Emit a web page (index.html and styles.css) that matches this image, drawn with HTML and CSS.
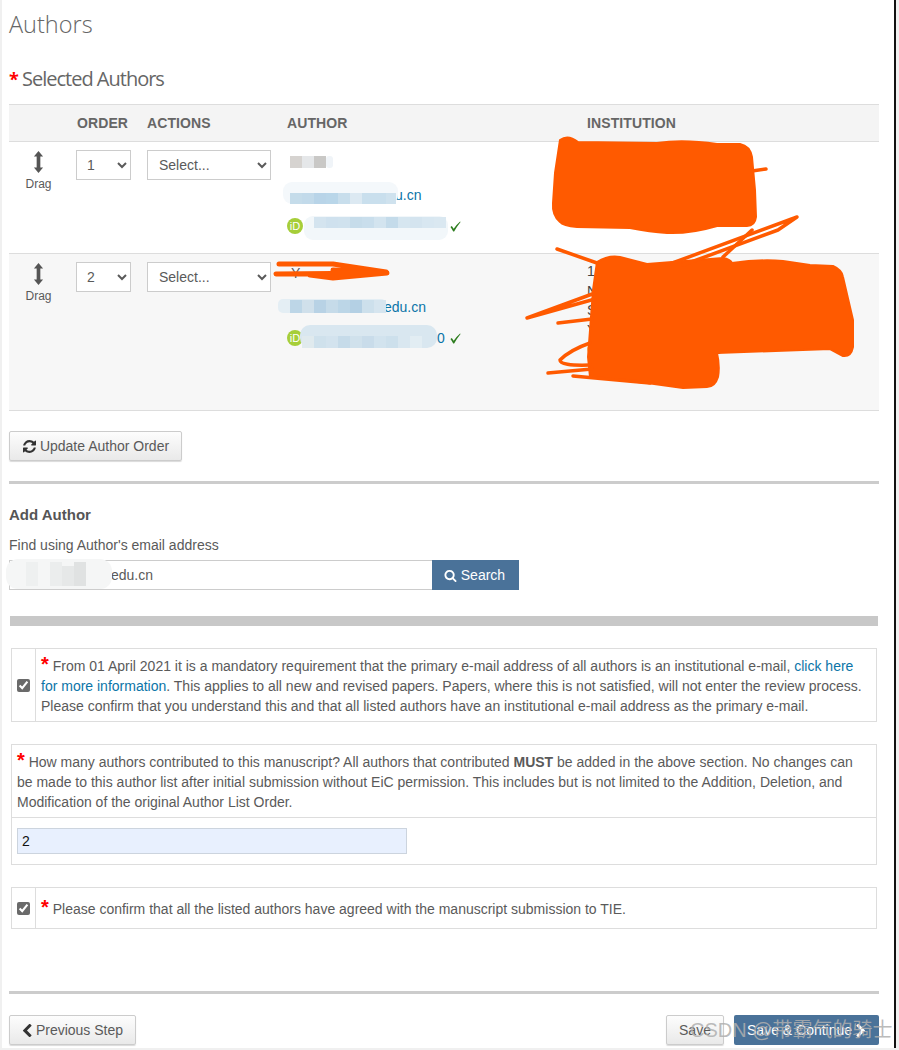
FILE: index.html
```html
<!DOCTYPE html>
<html lang="en">
<head>
    <meta charset="UTF-8">
    <meta name="viewport" content="width=device-width, initial-scale=1.0">
    <title>Authors</title>
    <link rel="stylesheet" href="styles.css">
</head>
<body>

<div class="page">
    <h1>Authors</h1>
    <h2><span class="req-big">*</span> Selected Authors</h2>

    <table class="authors">
        <thead>
            <tr>
                <th class="col-drag"></th>
                <th class="col-order">Order</th>
                <th class="col-actions">Actions</th>
                <th class="col-author">Author</th>
                <th>Institution</th>
            </tr>
        </thead>
        <tbody>
            <tr class="row-one">
                <td class="drag">
                    <svg class="drag-icon" viewBox="0 0 12 24"><path d="M6 0l5 6H8v12h3l-5 6-5-6h3V6H1z"/></svg>
                    <div>Drag</div>
                </td>
                <td><select class="order-select"><option>1</option><option>2</option></select></td>
                <td><select class="action-select"><option>Select...</option></select></td>
                <td>
                    <div class="name">&nbsp;</div>
                    <div class="email"><a class="mail-one" href="#">u.cn</a></div>
                    <div class="orcid">
                        <span class="orcid-badge">iD</span>
                        <a class="orcid-num-one" href="#">&nbsp;</a>
                        <svg class="tick" viewBox="0 0 12 12"><path d="M0.5 6.5L2 5.5L4 8.5Q7 4 11 0.5L11.5 1Q7.5 6 4.5 11.5H3.5Q2 8.5 0.5 6.5z"/></svg>
                    </div>
                </td>
                <td class="inst">&nbsp;</td>
            </tr>
            <tr class="row-two">
                <td class="drag">
                    <svg class="drag-icon" viewBox="0 0 12 24"><path d="M6 0l5 6H8v12h3l-5 6-5-6h3V6H1z"/></svg>
                    <div>Drag</div>
                </td>
                <td><select class="order-select"><option>2</option><option>1</option></select></td>
                <td><select class="action-select"><option>Select...</option></select></td>
                <td>
                    <div class="name">Y</div>
                    <div class="email"><a class="mail-two" href="#">edu.cn</a></div>
                    <div class="orcid">
                        <span class="orcid-badge">iD</span>
                        <a class="orcid-num-two" href="#">0</a>
                        <svg class="tick" viewBox="0 0 12 12"><path d="M0.5 6.5L2 5.5L4 8.5Q7 4 11 0.5L11.5 1Q7.5 6 4.5 11.5H3.5Q2 8.5 0.5 6.5z"/></svg>
                    </div>
                </td>
                <td class="inst">
                    <div>1</div>
                    <div>N</div>
                    <div>S</div>
                    <div>Y</div>
                    <div class="inst-last"><span>C</span><span>0</span></div>
                </td>
            </tr>
        </tbody>
    </table>

    <button class="btn btn-update" type="button">
        <svg class="icon icon-dark" viewBox="0 0 1536 1536"><path d="M1511 928q0 5-1 7-64 268-268 434.5t-478 166.5q-146 0-282.5-55t-243.5-157l-129 129q-19 19-45 19t-45-19-19-45v-448q0-26 19-45t45-19h448q26 0 45 19t19 45-19 45l-137 137q71 66 161 102t187 36q134 0 250-65t186-179q11-17 53-117 8-23 30-23h192q13 0 22.5 9.5t9.5 22.5zm25-800v448q0 26-19 45t-45 19h-448q-26 0-45-19t-19-45 19-45l138-138q-148-137-349-137-134 0-250 65t-186 179q-11 17-53 117-8 23-30 23h-199q-13 0-22.5-9.5t-9.5-22.5v-7q65-268 270-434.5t480-166.5q146 0 284 55.5t245 156.5l130-129q19-19 45-19t45 19 19 45z"/></svg>
        Update Author Order
    </button>

    <hr class="rule">

    <h3>Add Author</h3>
    <label class="find-label" for="find">Find using Author's email address</label>
    <div class="search-row">
        <input class="search-input" id="find" type="text" value="edu.cn">
        <button class="btn-search" type="button">
            <svg class="icon" viewBox="0 0 1792 1792"><path d="M1216 832q0-185-131.5-316.5t-316.5-131.5-316.5 131.5-131.5 316.5 131.5 316.5 316.5 131.5 316.5-131.5 131.5-316.5zm512 832q0 52-38 90t-90 38q-54 0-90-38l-343-342q-179 124-399 124-143 0-273.5-55.5t-225-150-150-225-55.5-273.5 55.5-273.5 150-225 225-150 273.5-55.5 273.5 55.5 225 150 150 225 55.5 273.5q0 220-124 399l343 343q37 37 37 90z"/></svg>
            Search
        </button>
    </div>

    <div class="thick-bar"></div>

    <div class="box box-check box-first">
        <div class="check-cell"><input type="checkbox" checked></div>
        <div class="box-text"><span class="req">*</span> From 01 April 2021 it is a mandatory requirement that the primary e-mail address of all authors is an institutional e-mail, <a href="#">click here for more information</a>. This applies to all new and revised papers. Papers, where this is not satisfied, will not enter the review process. Please confirm that you understand this and that all listed authors have an institutional e-mail address as the primary e-mail.</div>
    </div>

    <div class="box box-count">
        <div class="count-text"><span class="req">*</span> How many authors contributed to this manuscript? All authors that contributed <b>MUST</b> be added in the above section. No changes can be made to this author list after initial submission without EiC permission. This includes but is not limited to the Addition, Deletion, and Modification of the original Author List Order.</div>
        <div class="count-field"><input class="count-input" type="text" value="2"></div>
    </div>

    <div class="box box-check box-last">
        <div class="check-cell"><input type="checkbox" checked></div>
        <div class="box-text box-text-single"><span class="req">*</span> Please confirm that all the listed authors have agreed with the manuscript submission to TIE.</div>
    </div>

    <hr class="rule rule-bottom">

    <div class="footer-row">
        <button class="btn btn-prev" type="button">
            <svg class="icon icon-dark icon-chevron" viewBox="300 128 1200 1408"><path d="M1427 301l-531 531 531 531q19 19 19 45t-19 45l-166 166q-19 19-45 19t-45-19l-742-742q-19-19-19-45t19-45l742-742q19-19 45-19t45 19l166 166q19 19 19 45t-19 45z"/></svg>
            Previous Step
        </button>
        <div class="footer-right">
            <button class="btn btn-save" type="button">Save</button>
            <button class="btn-continue" type="button">
                Save &amp; Continue
                <svg class="icon icon-chevron" viewBox="300 128 1200 1408"><path d="M1363 877l-742 742q-19 19-45 19t-45-19l-166-166q-19-19-19-45t19-45l531-531-531-531q-19-19-19-45t19-45l166-166q19-19 45-19t45 19l742 742q19 19 19 45t-19 45z"/></svg>
            </button>
        </div>
    </div>
</div>

<!-- Redactions drawn over the screenshot: mosaics and orange marker -->
<svg class="overlay" viewBox="0 0 899 1050">
    <!-- name, row 1 -->
    <rect x="290" y="156" width="12" height="12" fill="#d6d3d0"/>
    <rect x="302" y="156" width="12" height="12" fill="#e5e7e9"/>
    <rect x="314" y="156" width="12" height="12" fill="#c9c8c6"/>
    <rect x="326" y="156" width="7" height="12" rx="3" fill="#f0f4f8"/>

    <!-- email, row 1 -->
    <rect x="283" y="182" width="115" height="22" rx="9" fill="#f4f8fb"/>
    <rect x="290" y="193" width="12" height="11" fill="#c5dcea"/>
    <rect x="302" y="193" width="12" height="11" fill="#c2daea"/>
    <rect x="314" y="193" width="12" height="11" fill="#b8d4e8"/>
    <rect x="326" y="193" width="12" height="11" fill="#b9d6e9"/>
    <rect x="338" y="193" width="12" height="11" fill="#c8deec"/>
    <rect x="350" y="193" width="12" height="11" fill="#dce9f2"/>
    <rect x="362" y="193" width="12" height="11" fill="#c9dfed"/>
    <rect x="374" y="193" width="12" height="11" fill="#c9dfed"/>
    <rect x="386" y="193" width="10" height="11" fill="#cfe2ee"/>

    <!-- orcid, row 1 -->
    <rect x="304" y="216" width="144" height="24" rx="9" fill="#f2f7fa"/>
    <rect x="314" y="217" width="12" height="11" fill="#d4e4ef"/>
    <rect x="326" y="217" width="12" height="11" fill="#cfe1ee"/>
    <rect x="338" y="217" width="12" height="11" fill="#d0e2ee"/>
    <rect x="350" y="217" width="12" height="11" fill="#c6dcea"/>
    <rect x="362" y="217" width="12" height="11" fill="#c9deec"/>
    <rect x="374" y="217" width="12" height="11" fill="#d3e4ef"/>
    <rect x="386" y="217" width="12" height="11" fill="#c4dbea"/>
    <rect x="398" y="217" width="12" height="11" fill="#d6e6f0"/>
    <rect x="410" y="217" width="12" height="11" fill="#d4e4ef"/>
    <rect x="422" y="217" width="12" height="11" fill="#d8e7f1"/>
    <rect x="434" y="217" width="12" height="11" fill="#dae8f1"/>

    <!-- email, row 2 -->
    <rect x="278" y="299" width="108" height="14" rx="5" fill="#e4eef4"/>
    <rect x="290" y="300" width="12" height="13" fill="#bdd6e7"/>
    <rect x="302" y="300" width="12" height="13" fill="#d0e0eb"/>
    <rect x="314" y="300" width="12" height="13" fill="#b8d2e5"/>
    <rect x="326" y="300" width="12" height="13" fill="#c6dbe9"/>
    <rect x="338" y="300" width="12" height="13" fill="#bcd6e7"/>
    <rect x="350" y="300" width="12" height="13" fill="#b4d0e4"/>
    <rect x="362" y="300" width="12" height="13" fill="#cde0ec"/>
    <rect x="374" y="300" width="12" height="13" fill="#d6e5ef"/>

    <!-- orcid, row 2 -->
    <rect x="300" y="325" width="137" height="23" rx="10" fill="#d9e7f0"/>
    <rect x="302" y="336" width="12" height="12" fill="#e0eaee"/>
    <rect x="314" y="336" width="12" height="12" fill="#cfe1ec"/>
    <rect x="326" y="336" width="12" height="12" fill="#d3e3ee"/>
    <rect x="338" y="336" width="12" height="12" fill="#c6dbe9"/>
    <rect x="350" y="336" width="12" height="12" fill="#d0e1ec"/>
    <rect x="362" y="336" width="12" height="12" fill="#c9dcea"/>
    <rect x="374" y="336" width="12" height="12" fill="#d2e3ee"/>
    <rect x="386" y="336" width="12" height="12" fill="#cde0ec"/>
    <rect x="410" y="336" width="12" height="12" fill="#e2edf3"/>

    <!-- search value -->
    <rect x="6" y="559" width="106" height="30" rx="12" fill="#f5f6f6"/>
    <rect x="26" y="562" width="12" height="24" fill="#eef0f0"/>
    <rect x="50" y="562" width="12" height="24" fill="#ebeded"/>
    <rect x="62" y="566" width="12" height="20" fill="#e6e8e8"/>
    <rect x="74" y="562" width="12" height="24" fill="#e0e2e2"/>

    <!-- marker, institution row 1 -->
    <path class="blob" d="M560 140Q568 134 578 142L657 143Q683 139 717 144L740 144Q750 146 752 157L755 190L756 217Q755 226 747 226L717 226Q690 234 667 233Q650 232 630 228L577 227Q563 226 560 222Q552 215 553 203L555 173Z"/>
    <path class="stroke" d="M752 171L766 169"/>

    <!-- marker, author name row 2 -->
    <path class="stroke name-mark" d="M279 264L333 264L386 272L333 270"/>
    <path class="stroke name-mark" d="M276 274L387 273L333 278L310 275"/>

    <!-- marker, institution row 2 -->
    <path class="blob" d="M597 262Q608 255 620 257L647 264L723 258Q730 259 732 263Q760 259 783 261L810 265L833 266Q842 270 843 277L853 320L853 347Q851 357 843 356L830 349L717 353Q720 366 718 377Q715 387 707 387L683 388L647 383L590 377L588 357L593 290Z"/>
    <path class="stroke" d="M557 249L597 263"/>
    <path class="stroke" d="M667 265L797 217L778 230L683 265"/>
    <path class="stroke" d="M752 230L723 257"/>
    <path class="stroke" d="M595 293L527 318L595 299"/>
    <path class="stroke" d="M558 323L592 319"/>
    <path class="stroke" d="M590 343Q570 350 560 360Q560 366 590 365"/>
    <path class="stroke" d="M548 373L592 369"/>
    <path class="stroke" d="M573 376L650 383"/>
</svg>

<div class="watermark">CSDN @带霸气的骑士</div>

</body>
</html>
```

FILE: styles.css
```css
html, body {
    margin: 0;
    height: 1050px;
    overflow: hidden;
}

body {
    position: relative;
    font-family: "Liberation Sans", Arial, sans-serif;
    font-size: 14px;
    line-height: 20px;
    color: #5a5a5a;
    background: #f0f0f0;
}

a {
    color: #0b75a8;
    text-decoration: none;
}

.page {
    box-sizing: border-box;
    width: 894px;
    height: 1048px;
    margin-left: 2px;
    padding: 0 15px 0 7px;
    background: #fff;
    border-right: 2px solid #111;
}

h1 {
    margin: 0;
    padding-top: 9px;
    font-family: "Open Sans", sans-serif;
    font-size: 23.5px;
    font-weight: 300;
    line-height: 30px;
    color: #666;
}

h2 {
    margin: 25px 0 0;
    font-family: "Open Sans", sans-serif;
    font-size: 20px;
    font-weight: 400;
    line-height: 30px;
    letter-spacing: -1px;
    color: #666;
}

.req-big {
    color: #f00;
    font-size: 18px;
    font-weight: 700;
}

/* Authors table */
.authors {
    width: 870px;
    margin-top: 10px;
    border-collapse: collapse;
    table-layout: fixed;
}

.authors th {
    height: 36px;
    padding: 0;
    text-align: left;
    font-size: 14px;
    text-transform: uppercase;
    letter-spacing: 0.1px;
    color: #666;
    background: #f4f4f4;
    border-top: 1px solid #ddd;
    border-bottom: 1px solid #ddd;
}

.col-drag { width: 68px; }
.col-order { width: 70px; }
.col-actions { width: 140px; }
.col-author { width: 300px; }

.authors td {
    padding: 8px 0 0;
    vertical-align: top;
}

.row-one td { height: 103px; }

.row-two td {
    height: 148px;
    background: #f7f7f7;
    border-top: 1px solid #ddd;
    border-bottom: 1px solid #ddd;
}

.drag {
    text-align: center;
    font-size: 12px;
    line-height: 14px;
}

.drag-icon {
    display: block;
    width: 11px;
    height: 24px;
    margin: 0 auto 3px;
    fill: #555;
}

.authors .drag div {
    width: 59px;
}

.authors .drag svg {
    margin-left: 24px;
}

select {
    height: 30px;
    box-sizing: border-box;
    padding: 0 7px;
    font-family: inherit;
    font-size: 14px;
    color: #5a5a5a;
    background: #fff;
    border: 1px solid #ccc;
}

.order-select {
    width: 55px;
    margin-left: -1px;
    padding: 0 6px;
}

.action-select {
    width: 124px;
}

.name {
    height: 20px;
    padding: 1px 0 0 4px;
}

.email {
    margin-top: 14px;
    height: 20px;
}

.mail-one { padding-left: 108px; }
.mail-two { padding-left: 97px; }

.orcid {
    display: flex;
    align-items: center;
    margin-top: 11px;
    height: 20px;
}

.orcid-badge {
    width: 16px;
    height: 16px;
    flex: none;
    border-radius: 50%;
    background: #a6ce39;
    color: #fff;
    font-size: 11px;
    line-height: 16px;
    text-align: center;
}

.orcid-num-one { width: 147px; }
.orcid-num-two { width: 147px; padding-left: 134px; box-sizing: border-box; }

.tick {
    width: 11px;
    height: 11px;
    fill: #2d7d1f;
}

.inst {
    line-height: 19.5px;
    color: #444;
}

.inst-last {
    display: flex;
    justify-content: space-between;
    width: 135px;
}

/* Buttons */
.btn {
    box-sizing: border-box;
    height: 30px;
    padding: 0 12px;
    font-family: inherit;
    font-size: 14px;
    color: #5a5a5a;
    background: linear-gradient(#fdfdfd, #e9e9e9);
    border: 1px solid #ccc;
    border-radius: 2px;
    box-shadow: 0 1px 1px rgba(0, 0, 0, 0.15);
}

.icon {
    width: 13px;
    height: 13px;
    fill: #fff;
    vertical-align: -2px;
}

.icon-dark { fill: #333; }

.icon-chevron {
    width: 10px;
}

.btn-update {
    display: block;
    width: 173px;
    margin-top: 20px;
    padding: 0 0 0 13px;
    text-align: left;
}

.btn-prev {
    width: 127px;
    padding: 0 0 0 12px;
    text-align: left;
}

.rule {
    height: 3px;
    margin: 20px 0 0;
    background: #ccc;
    border: 0;
}

.rule-bottom {
    margin-top: 62px;
}

h3 {
    margin: 21px 0 0;
    font-size: 15px;
    line-height: 20px;
    color: #555;
}

.find-label {
    display: block;
    margin-top: 10px;
}

.search-row {
    display: flex;
    margin-top: 5px;
}

.search-input {
    box-sizing: border-box;
    width: 423px;
    height: 30px;
    padding: 0 0 0 101px;
    font-family: inherit;
    font-size: 14px;
    color: #5a5a5a;
    border: 1px solid #ccc;
    border-right: 0;
}

.btn-search, .btn-continue {
    height: 30px;
    font-family: inherit;
    font-size: 14px;
    color: #fff;
    background: #4a7299;
    border: 0;
}

.btn-search {
    width: 87px;
    padding: 0 2px 0 0;
}

.thick-bar {
    height: 10px;
    margin: 26px 1px 0;
    background: #c8c8c8;
}

/* Question boxes */
.box {
    box-sizing: border-box;
    width: 866px;
    margin-left: 2px;
    border: 1px solid #ddd;
}

.box-check {
    display: flex;
}

.box-first { margin-top: 22px; }
.box-last { margin-top: 22px; }
.box-count { margin-top: 22px; }

.check-cell {
    display: flex;
    align-items: center;
    justify-content: center;
    flex: none;
    width: 23px;
    border-right: 1px solid #ddd;
}

.check-cell input {
    width: 13px;
    height: 13px;
    margin: 0;
    accent-color: #6a6a6a;
}

.box-text {
    padding: 7px 5px 5px;
}

.box-text-single {
    padding: 11px 5px 9px;
}

.req {
    color: #f00;
    font-size: 20px;
    font-weight: 700;
    line-height: 0;
}

.count-text {
    padding: 7px 5px 5px;
    border-bottom: 1px solid #ddd;
}

.count-field {
    padding: 10px 5px;
}

.count-input {
    display: block;
    box-sizing: border-box;
    width: 390px;
    height: 26px;
    padding: 0 4px;
    font-family: inherit;
    font-size: 14px;
    color: #111;
    background: #e8f0fe;
    border: 1px solid #ccd4de;
}

/* Footer */
.footer-row {
    display: flex;
    justify-content: space-between;
    margin-top: 21px;
}

.footer-right {
    display: flex;
    gap: 10px;
}

.btn-save {
    width: 58px;
    padding: 0;
}

.btn-continue {
    width: 145px;
    padding: 0;
    border-radius: 2px;
}

/* Overlays */
.overlay {
    position: absolute;
    top: 0;
    left: 0;
    width: 899px;
    height: 1050px;
    pointer-events: none;
}

.blob {
    fill: #ff5a00;
    stroke: #ff5a00;
    stroke-width: 2;
    stroke-linejoin: round;
}

.stroke {
    fill: none;
    stroke: #ff5a00;
    stroke-width: 3.5;
    stroke-linecap: round;
    stroke-linejoin: round;
}

.name-mark {
    stroke-width: 5;
}

.watermark {
    position: absolute;
    top: 1016px;
    left: 690px;
    font-family: "Liberation Sans", "Noto Sans CJK SC", sans-serif;
    font-size: 20px;
    line-height: 28px;
    white-space: nowrap;
    color: rgba(175, 175, 175, 0.85);
}
```
